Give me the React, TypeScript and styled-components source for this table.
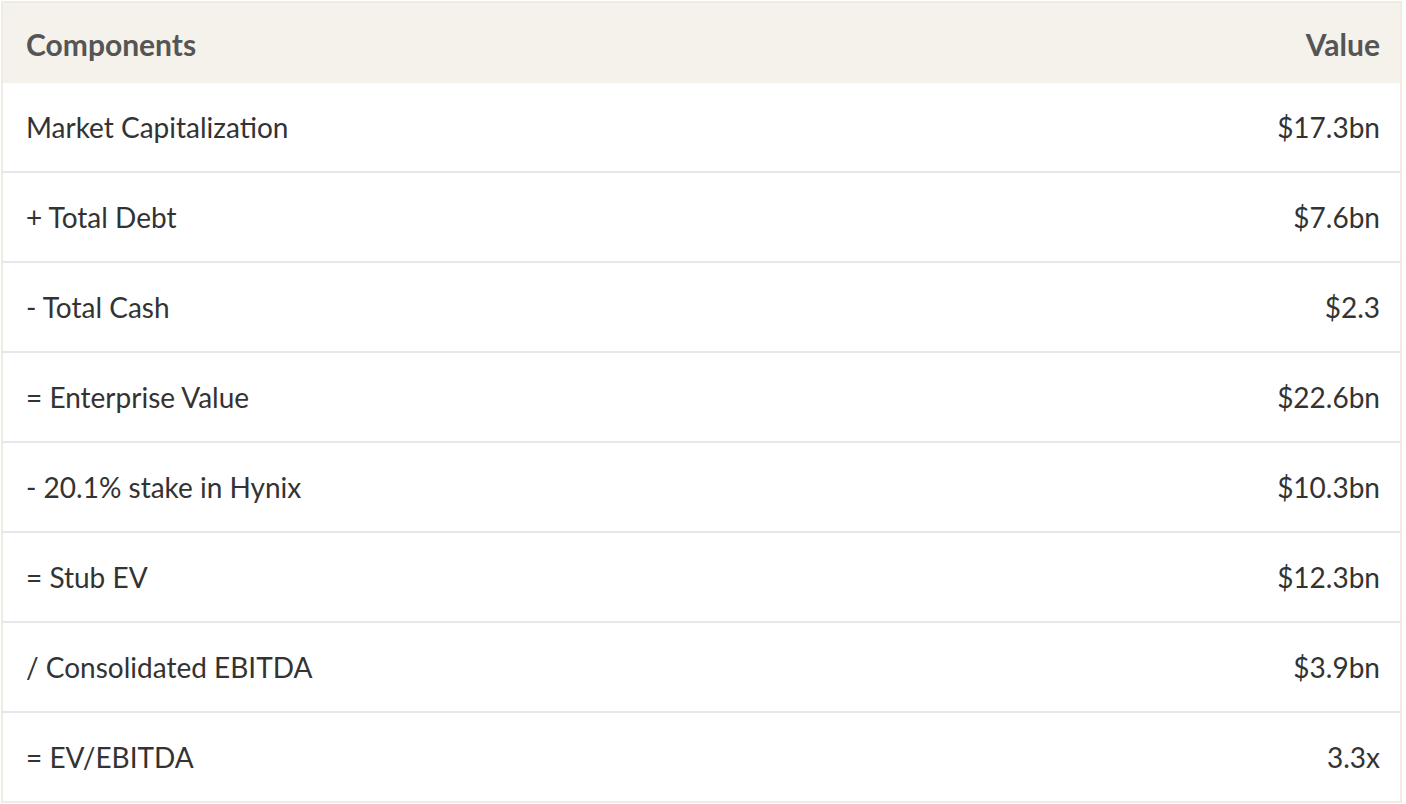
import styled, { createGlobalStyle } from 'styled-components'

const GlobalStyle = createGlobalStyle`
  body {
    margin: 0;
    background: #ffffff;
    font-family: Lato, "Liberation Sans", sans-serif;
  }
`

const Wrapper = styled.div`
  padding: 1px 4px 0 1px;
`

const Table = styled.table`
  width: 100%;
  border-collapse: collapse;
  border: 2px solid #efece4;
`

const HeadCell = styled.th<{ $align?: 'left' | 'right' }>`
  height: 78px;
  padding: 2px 20px 0 23px;
  background: #f4f2eb;
  color: #555555;
  font-size: 30px;
  font-weight: 700;
  text-align: ${({ $align }) => $align ?? 'left'};
`

const Row = styled.tr`
  border-bottom: 2px solid #e8e8e8;
  &:last-child {
    border-bottom: none;
  }
`

const Cell = styled.td<{ $align?: 'left' | 'right' }>`
  height: 88px;
  padding: 0 20px 0 23px;
  color: #333333;
  font-size: 28px;
  text-align: ${({ $align }) => $align ?? 'left'};
`

const rows: [string, string][] = [
  ['Market Capitalization', '$17.3bn'],
  ['+ Total Debt', '$7.6bn'],
  ['- Total Cash', '$2.3'],
  ['= Enterprise Value', '$22.6bn'],
  ['- 20.1% stake in Hynix', '$10.3bn'],
  ['= Stub EV', '$12.3bn'],
  ['/ Consolidated EBITDA', '$3.9bn'],
  ['= EV/EBITDA', '3.3x'],
]

export default function App() {
  return (
    <>
      <GlobalStyle />
      <Wrapper>
        <Table>
          <thead>
            <tr>
              <HeadCell>Components</HeadCell>
              <HeadCell $align="right">Value</HeadCell>
            </tr>
          </thead>
          <tbody>
            {rows.map(([label, value]) => (
              <Row key={label}>
                <Cell>{label}</Cell>
                <Cell $align="right">{value}</Cell>
              </Row>
            ))}
          </tbody>
        </Table>
      </Wrapper>
    </>
  )
}
